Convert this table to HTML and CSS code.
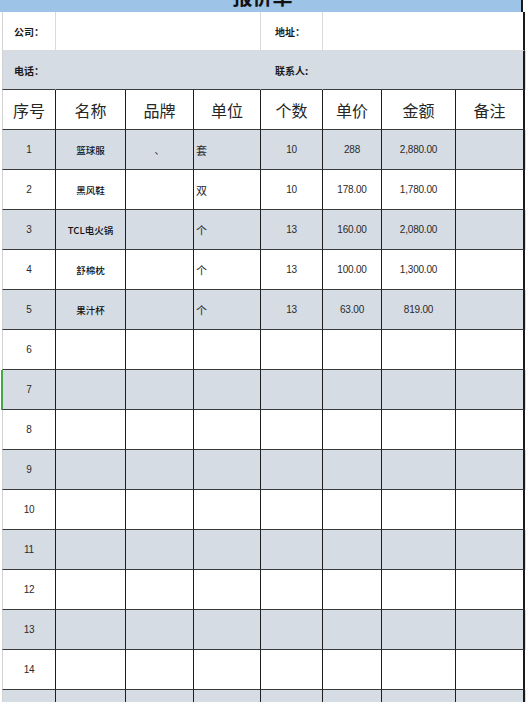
FILE: index.html
```html
<!DOCTYPE html>
<html lang="zh-CN">
<head>
<meta charset="utf-8">
<title>报价单</title>
<link rel="stylesheet" href="styles.css">
</head>
<body>
<div class="sheet">
  <div class="title">报价单</div>
  <div class="row info info-1">
    <div class="cell lab">公司：</div>
    <div class="cell val span3"></div>
    <div class="cell lab">地址：</div>
    <div class="cell val span3 last"></div>
  </div>
  <div class="row info info-2">
    <div class="cell lab">电话：</div>
    <div class="cell val span3"></div>
    <div class="cell lab">联系人:</div>
    <div class="cell val span3 last"></div>
  </div>
  <div class="row head">
    <div class="cell">序号</div>
    <div class="cell">名称</div>
    <div class="cell">品牌</div>
    <div class="cell">单位</div>
    <div class="cell">个数</div>
    <div class="cell">单价</div>
    <div class="cell">金额</div>
    <div class="cell last">备注</div>
  </div>
  <div class="row data odd">
    <div class="cell">1</div><div class="cell name">篮球服</div><div class="cell">、</div><div class="cell unit">套</div>
    <div class="cell">10</div><div class="cell">288</div><div class="cell">2,880.00</div><div class="cell last"></div>
  </div>
  <div class="row data">
    <div class="cell">2</div><div class="cell name">黑风鞋</div><div class="cell"></div><div class="cell unit">双</div>
    <div class="cell">10</div><div class="cell">178.00</div><div class="cell">1,780.00</div><div class="cell last"></div>
  </div>
  <div class="row data odd">
    <div class="cell">3</div><div class="cell name">TCL电火锅</div><div class="cell"></div><div class="cell unit">个</div>
    <div class="cell">13</div><div class="cell">160.00</div><div class="cell">2,080.00</div><div class="cell last"></div>
  </div>
  <div class="row data">
    <div class="cell">4</div><div class="cell name">舒棉枕</div><div class="cell"></div><div class="cell unit">个</div>
    <div class="cell">13</div><div class="cell">100.00</div><div class="cell">1,300.00</div><div class="cell last"></div>
  </div>
  <div class="row data odd">
    <div class="cell">5</div><div class="cell name">果汁杯</div><div class="cell"></div><div class="cell unit">个</div>
    <div class="cell">13</div><div class="cell">63.00</div><div class="cell">819.00</div><div class="cell last"></div>
  </div>
  <div class="row data">
    <div class="cell">6</div><div class="cell"></div><div class="cell"></div><div class="cell"></div>
    <div class="cell"></div><div class="cell"></div><div class="cell"></div><div class="cell last"></div>
  </div>
  <div class="row data odd">
    <div class="cell selected">7</div><div class="cell"></div><div class="cell"></div><div class="cell"></div>
    <div class="cell"></div><div class="cell"></div><div class="cell"></div><div class="cell last"></div>
  </div>
  <div class="row data">
    <div class="cell">8</div><div class="cell"></div><div class="cell"></div><div class="cell"></div>
    <div class="cell"></div><div class="cell"></div><div class="cell"></div><div class="cell last"></div>
  </div>
  <div class="row data odd">
    <div class="cell">9</div><div class="cell"></div><div class="cell"></div><div class="cell"></div>
    <div class="cell"></div><div class="cell"></div><div class="cell"></div><div class="cell last"></div>
  </div>
  <div class="row data">
    <div class="cell">10</div><div class="cell"></div><div class="cell"></div><div class="cell"></div>
    <div class="cell"></div><div class="cell"></div><div class="cell"></div><div class="cell last"></div>
  </div>
  <div class="row data odd">
    <div class="cell">11</div><div class="cell"></div><div class="cell"></div><div class="cell"></div>
    <div class="cell"></div><div class="cell"></div><div class="cell"></div><div class="cell last"></div>
  </div>
  <div class="row data">
    <div class="cell">12</div><div class="cell"></div><div class="cell"></div><div class="cell"></div>
    <div class="cell"></div><div class="cell"></div><div class="cell"></div><div class="cell last"></div>
  </div>
  <div class="row data odd">
    <div class="cell">13</div><div class="cell"></div><div class="cell"></div><div class="cell"></div>
    <div class="cell"></div><div class="cell"></div><div class="cell"></div><div class="cell last"></div>
  </div>
  <div class="row data">
    <div class="cell">14</div><div class="cell"></div><div class="cell"></div><div class="cell"></div>
    <div class="cell"></div><div class="cell"></div><div class="cell"></div><div class="cell last"></div>
  </div>
  <div class="row data odd">
    <div class="cell"></div><div class="cell"></div><div class="cell"></div><div class="cell"></div>
    <div class="cell"></div><div class="cell"></div><div class="cell"></div><div class="cell last"></div>
  </div>
</div>
</body>
</html>
```
FILE: styles.css
```css
html, body {
  margin: 0;
  padding: 0;
  background: #ffffff;
  overflow: hidden;
}

.sheet {
  width: 526px;
  height: 702px;
  overflow: hidden;
  padding-left: 2px;
  box-sizing: border-box;
  font-family: "Noto Sans CJK SC", "Noto Sans", sans-serif;
  color: #222;
}

.title {
  margin-top: -19px;
  margin-left: -2px;
  width: 523px;
  height: 31px;
  box-sizing: border-box;
  background: #9dc3e6;
  border-right: 2px solid #1a1a1a;
  text-align: center;
  font-size: 20px;
  font-weight: 700;
  line-height: 31px;
  color: #111;
  padding-left: 4px;
}

.row {
  display: grid;
  grid-template-columns: 54px 70px 68px 67px 62px 59px 74px 69px;
  height: 40px;
}

.cell {
  box-sizing: border-box;
  border-right: 1px solid #1e1e1e;
  border-bottom: 1px solid #3a3a3a;
  display: flex;
  align-items: center;
  justify-content: center;
  white-space: nowrap;
  overflow: hidden;
}

.cell:first-child {
  border-left: 1px solid #d2d2d2;
}

.cell.last {
  border-right: 2px solid #1a1a1a;
}

.span3 {
  grid-column: span 3;
}

/* info rows */
.info {
  height: 39px;
}

.info .cell {
  border-right: 1px solid #dadada;
  border-bottom: 1px solid #dadada;
  justify-content: flex-start;
}

.info .cell.last {
  border-right: 2px solid #1a1a1a;
}

.info .lab {
  font-size: 10px;
  font-weight: 700;
  padding-left: 11px;
  color: #1a1a1a;
}

.info-1 {
  background: #ffffff;
}

.info-2 {
  background: #d6dce4;
}

.info-2 .cell {
  border-right-color: #d6dce4;
  border-bottom: 1px solid #3c3c3c;
}

.info-2 .cell:first-child {
  border-left-color: #d2d2d2;
}

.info-2 .cell.last {
  border-right: 2px solid #1a1a1a;
}

.info-2 .lab:nth-child(3) {
  padding-left: 14px;
}

.info-1 .lab:nth-child(3) {
  padding-left: 14px;
}

/* header */
.head .cell {
  font-size: 16px;
  color: #262626;
}

/* data rows */
.data {
  background: #ffffff;
}

.data.odd {
  background: #d6dce4;
}

.data .cell {
  font-family: "Liberation Sans", "Noto Sans CJK SC", sans-serif;
  font-size: 10px;
  letter-spacing: -0.2px;
  color: #2a2a2a;
}

.data .name {
  font-family: "Noto Sans CJK SC", sans-serif;
  font-size: 9.5px;
  font-weight: 500;
  letter-spacing: 0;
  color: #111;
}

.data .unit {
  justify-content: flex-start;
  padding-left: 2px;
  font-family: "Noto Sans CJK SC", sans-serif;
  font-size: 11px;
  letter-spacing: 0;
}

.data .cell.selected {
  border-left: 1px solid #44a845;
  box-shadow: -1px 0 0 #44a845;
}
```
